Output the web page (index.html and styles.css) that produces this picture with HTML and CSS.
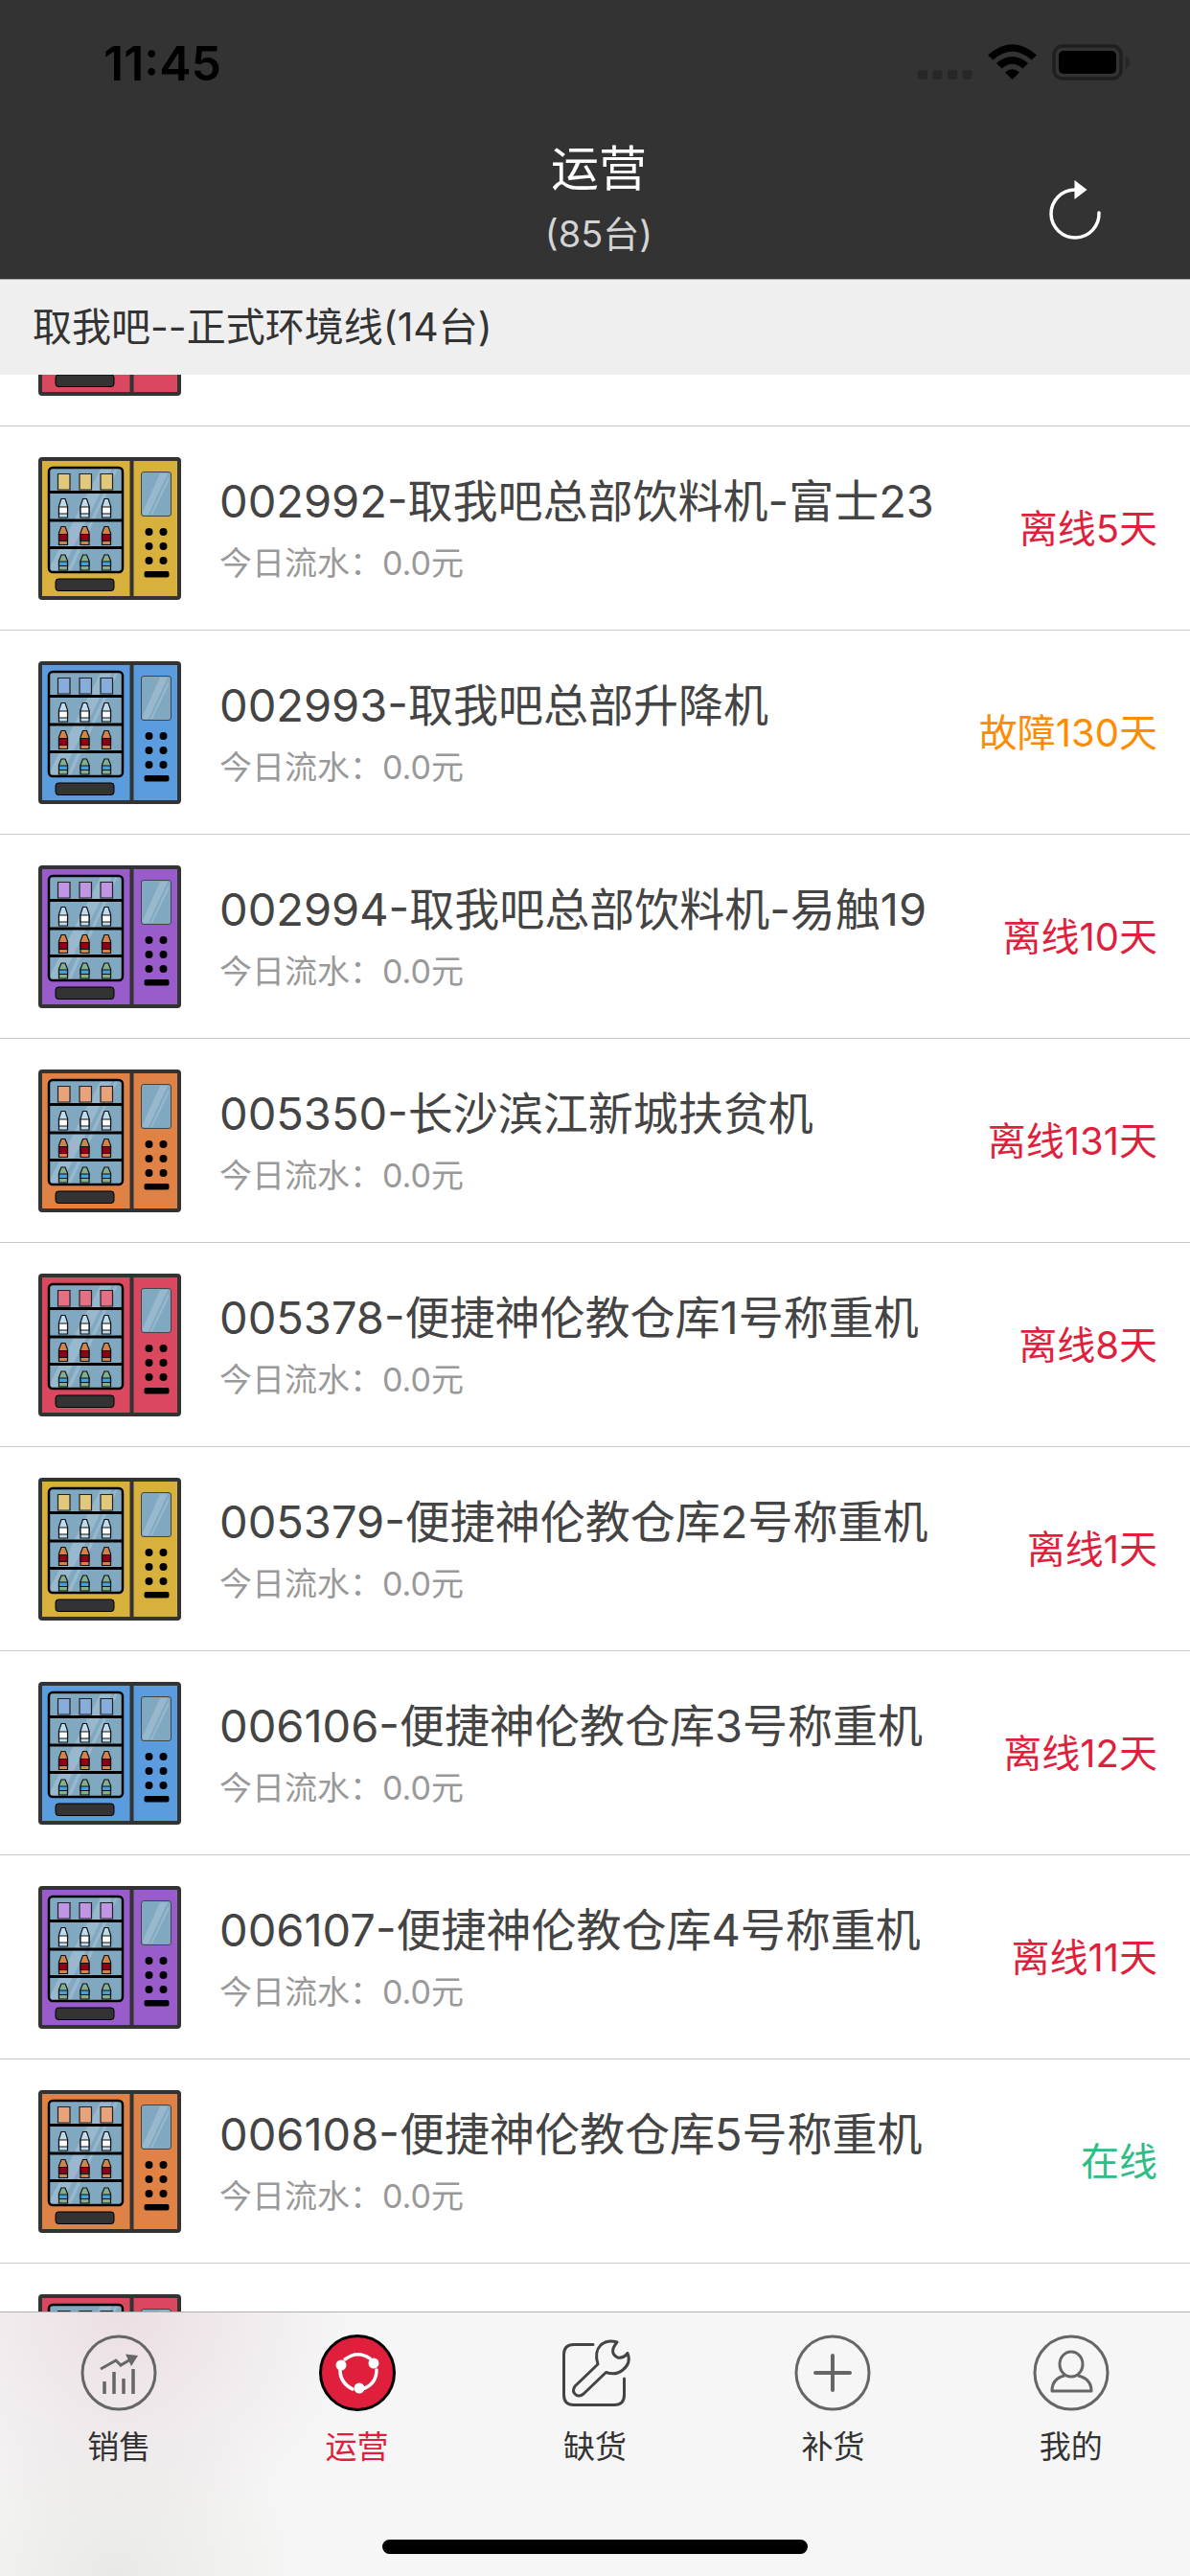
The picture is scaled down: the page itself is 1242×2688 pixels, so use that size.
FILE: index.html
```
<!DOCTYPE html>
<html lang="zh-CN">

<head>
    <title>运营</title>
    <meta charset="UTF-8">
    <meta name="viewport" content="width=device-width, initial-scale=1">
    <link rel="stylesheet" href="styles.css">
</head>

<body>
    <!-- Shared machine drawing, cabinet and product colours come from the row class -->
    <svg class="defs" aria-hidden="true">
        <symbol id="machine" viewBox="0 0 149 149">
            <rect x="2" y="2" width="145" height="145" rx="2" class="cabinet" stroke="#333" stroke-width="4" />
            <path d="M97.500 2V147" stroke="#333" stroke-width="4" />
            <rect x="11" y="11" width="77" height="109" rx="4" fill="#80a8c1" />
            <path d="M65 12H77L24 119H13V113ZM80 12H83L34 119H30Z" fill="#98b9cd" />
            <path d="M12 36.500H88M12 66H88M12 94.500H88" stroke="#000" stroke-width="3" />
            <rect x="11" y="11" width="77" height="109" rx="4" fill="none" stroke="#000" stroke-width="2.500" />
            <g class="box" stroke="#222" stroke-width="1.200">
                <path d="M20.500 17.500H33V34H20.500ZM43 17.500H55.500V34H43ZM65 17.500H77.500V34H65Z" />
            </g>
            <g stroke="#111" stroke-width="1.200">
                <g id="bottles">
                    <path d="M24 43.500H28L30.500 51V63H21.500V51Z" fill="#bedcee" />
                    <path d="M21.500 52H30.500V59H21.500Z" fill="#fff" />
                    <path d="M24 72.500H28L30.500 79V91.500H21.500V79Z" fill="#d38349" />
                    <path d="M21.500 80.500H30.500V87.500H21.500Z" fill="#8d0017" />
                    <path d="M24 102H28L30.500 108V118H21.500V108Z" fill="#85ae8c" />
                    <path d="M21.500 109H30.500V113.500H21.500Z" fill="#40a2df" />
                </g>
                <use href="#bottles" x="22.500" />
                <use href="#bottles" x="45" />
            </g>
            <rect x="18" y="127" width="61" height="12.500" rx="3" fill="#333" stroke="#000" />
            <rect x="107.500" y="15.500" width="31" height="46" rx="2.500" fill="#80a8c1" stroke="#444" />
            <path d="M127 17H135L115 60H109V57ZM136 20V25L119 60H117Z" fill="#98b9cd" />
            <circle cx="115.500" cy="78" r="4" />
            <circle cx="130.500" cy="78" r="4" />
            <circle cx="115.500" cy="93" r="4" />
            <circle cx="130.500" cy="93" r="4" />
            <circle cx="115.500" cy="108" r="4" />
            <circle cx="130.500" cy="108" r="4" />
            <rect x="110.500" y="119" width="26" height="6.500" rx="2" />
        </symbol>
    </svg>

    <div class="app">
        <header class="header">
            <div class="status-bar">
                <span class="time">11:45</span>
                <svg class="status-icons" viewBox="0 0 224 40" aria-hidden="true">
                    <g fill="#272727">
                        <rect x="0" y="27" width="10" height="10" rx="3" />
                        <rect x="15.500" y="27" width="10" height="10" rx="3" />
                        <rect x="31" y="27" width="10" height="10" rx="3" />
                        <rect x="46.500" y="27" width="10" height="10" rx="3" />
                        <path d="M216.500 12.500Q221 14 221 19T216.500 25.500Z" />
                    </g>
                    <path d="M73 11.500Q98.500-11 124 11.500L118.500 16.500Q98.500-1 78.500 16.500Z" />
                    <path d="M82 20Q98.500 6 115 20L109.500 25.500Q98.500 16 87.500 25.500Z" />
                    <path d="M91 29.500Q98.500 23 106 29.500L98.500 37Z" />
                    <rect x="142" y="2" width="70" height="34" rx="9" fill="none" stroke="#1f1f1f" stroke-width="3.500" />
                    <rect x="147" y="7" width="60" height="24" rx="5" />
                </svg>
            </div>
            <div class="nav-bar">
                <div class="heading">
                    <h1>运营</h1>
                    <p>(85台)</p>
                </div>
                <button type="button" class="refresh" aria-label="刷新">
                    <svg viewBox="0 0 60 66">
                        <path d="M55 36A25 25 0 1 1 30 12" fill="none" stroke="#fff" stroke-width="3.500" stroke-linecap="round" />
                        <path d="M29.500 2L42.500 12L29.500 22Z" fill="#fff" />
                    </svg>
                </button>
            </div>
        </header>

        <h2 class="section-title">取我吧--正式环境线(14台)</h2>

        <main class="list-wrap">
            <ul id="machine-list" class="list"></ul>
        </main>

        <nav class="tab-bar">
            <div class="tabs">
                <a href="#sales" class="tab">
                    <svg viewBox="0 0 80 80" fill="none" stroke="#666" stroke-width="3">
                        <circle cx="40" cy="40" r="38" />
                        <path d="M25 49V62M35 39V62M45 46V62M55 36V62" stroke-width="3.500" />
                        <path d="M21 36L37 27L42 32L54 25" />
                        <path d="M47 20.500L60 22L53 33Z" fill="#666" stroke="none" />
                    </svg>
                    <span>销售</span>
                </a>
                <a href="#operation" class="tab active">
                    <svg viewBox="0 0 80 80" fill="none" stroke="#fff" stroke-width="3.500">
                        <circle cx="40" cy="40" r="38.500" fill="#e01f3d" stroke="#000" stroke-width="3" />
                        <path d="M27 26Q40 16 53 25M22 35Q21 50 35 57M45 57Q60 52 60 37" stroke-linecap="round" />
                        <g fill="#fff" stroke="none">
                            <circle cx="23" cy="32" r="5.500" />
                            <circle cx="57" cy="30" r="5.500" />
                            <circle cx="42" cy="56" r="5.500" />
                        </g>
                    </svg>
                    <span>运营</span>
                </a>
                <a href="#shortage" class="tab">
                    <svg viewBox="0 0 80 80" fill="none" stroke="#444" stroke-width="3" stroke-linecap="round" stroke-linejoin="round">
                        <path d="M38 10.500H18Q7.500 10.500 7.500 21V63Q7.500 73.500 18 73.500H60Q70.500 73.500 70.500 63V46" />
                        <path d="M63 8Q53 5 46 11Q39 18 43 31L19 54Q16 59 19 62Q23 66 28 62L51.500 39.500Q62 43 69 37Q78 30 74 19.500Q70 25 63.500 24Q54 19 63 8Z" />
                    </svg>
                    <span>缺货</span>
                </a>
                <a href="#restock" class="tab">
                    <svg viewBox="0 0 80 80" fill="none" stroke="#666" stroke-width="3">
                        <circle cx="40" cy="40" r="38" />
                        <path d="M40 22V58M22 40H58" stroke-width="4" stroke-linecap="round" />
                    </svg>
                    <span>补货</span>
                </a>
                <a href="#mine" class="tab">
                    <svg viewBox="0 0 80 80" fill="none" stroke="#666" stroke-width="3">
                        <circle cx="40" cy="40" r="38" />
                        <ellipse cx="40" cy="31" rx="12" ry="13" />
                        <path d="M33 43Q20 46 20 59H61Q61 46 47 43" stroke-linejoin="round" />
                    </svg>
                    <span>我的</span>
                </a>
            </div>
            <div class="home-indicator"></div>
        </nav>
    </div>

    <script>
        // Rows without a name are the ones scrolled half out of view
        const machines = [
            { color: 'red' },
            { name: '002992-取我吧总部饮料机-富士23', color: 'yellow', status: '离线5天', state: 'offline' },
            { name: '002993-取我吧总部升降机', color: 'blue', status: '故障130天', state: 'fault' },
            { name: '002994-取我吧总部饮料机-易触19', color: 'purple', status: '离线10天', state: 'offline' },
            { name: '005350-长沙滨江新城扶贫机', color: 'orange', status: '离线131天', state: 'offline' },
            { name: '005378-便捷神伦教仓库1号称重机', color: 'red', status: '离线8天', state: 'offline' },
            { name: '005379-便捷神伦教仓库2号称重机', color: 'yellow', status: '离线1天', state: 'offline' },
            { name: '006106-便捷神伦教仓库3号称重机', color: 'blue', status: '离线12天', state: 'offline' },
            { name: '006107-便捷神伦教仓库4号称重机', color: 'purple', status: '离线11天', state: 'offline' },
            { name: '006108-便捷神伦教仓库5号称重机', color: 'orange', status: '在线', state: 'online' },
            { color: 'red' }
        ];

        const list = document.getElementById('machine-list');

        // Build one row for each machine
        machines.forEach(function (machine) {
            const li = document.createElement('li');
            li.className = 'row ' + machine.color;
            li.innerHTML = '<svg class="machine" aria-hidden="true"><use href="#machine"></use></svg>';

            if (machine.name) {
                li.innerHTML +=
                    '<div class="info"><h3>' + machine.name + '</h3><p>今日流水：0.0元</p></div>' +
                    '<span class="state ' + machine.state + '">' + machine.status + '</span>';
            }
            list.appendChild(li);
        });
    </script>
</body>

</html>
```
FILE: styles.css
```
* {
    box-sizing: border-box;
}

body {
    margin: 0;
    font-family: Inter, "Noto Sans CJK SC", sans-serif;
    background-color: #fff;
    color: #444;
}

h1,
h2,
h3,
p,
ul {
    margin: 0;
    padding: 0;
    font-weight: normal;
}

.defs {
    position: absolute;
    width: 0;
    height: 0;
}

.app {
    display: flex;
    flex-direction: column;
    height: 100vh;
}

/* header */
.header {
    background-color: #333;
    border-bottom: 1px solid #aaa;
}

.status-bar {
    display: flex;
    justify-content: space-between;
    align-items: center;
    height: 132px;
    padding: 0 60px 0 108px;
}

.time {
    font-size: 50px;
    font-weight: 600;
    color: #000;
}

.status-icons {
    width: 224px;
    height: 40px;
}

.nav-bar {
    display: grid;
    grid-template-columns: 1fr auto 1fr;
    height: 159px;
    padding-left: 8px;
}

.heading {
    grid-column: 2;
    padding-top: 2px;
    text-align: center;
    color: #fff;
}

.heading h1 {
    font-size: 50px;
    line-height: 84px;
}

.heading p {
    font-size: 38px;
    line-height: 52px;
    color: #d4d4d4;
}

.refresh {
    justify-self: end;
    align-self: start;
    margin: 54px 90px 0 0;
    padding: 0;
    border: none;
    background: none;
    cursor: pointer;
}

.refresh svg {
    display: block;
    width: 60px;
    height: 66px;
}

.section-title {
    height: 99px;
    padding: 0 34px;
    background-color: #efefef;
    font-size: 41px;
    line-height: 99px;
    color: #333;
}

/* machine list */
.list-wrap {
    flex: 1;
    min-height: 0;
    overflow: hidden;
}

.list {
    margin-top: -159px;
    list-style-type: none;
}

.row {
    display: flex;
    align-items: center;
    height: 213px;
    padding: 0 34px 0 40px;
    border-bottom: 1px solid #c8c8c8;
}

.machine {
    flex: none;
    width: 149px;
    height: 149px;
    margin-right: 40px;
}

.cabinet {
    fill: var(--cabinet);
}

.box {
    fill: var(--box);
}

.red {
    --cabinet: #d9485f;
    --box: #e57085;
}

.yellow {
    --cabinet: #d7b13c;
    --box: #e1c87c;
}

.blue {
    --cabinet: #5b9cdf;
    --box: #86addb;
}

.purple {
    --cabinet: #985dcb;
    --box: #c095e3;
}

.orange {
    --cabinet: #e08246;
    --box: #e8a37b;
}

.info {
    flex: 1;
    padding-top: 4px;
}

.info h3 {
    font-size: 47px;
    line-height: 70px;
    white-space: nowrap;
}

.info p {
    font-size: 34px;
    line-height: 60px;
    color: #999;
}

.state {
    padding-bottom: 4px;
    font-size: 40px;
}

.offline {
    color: #e01f3d;
}

.fault {
    color: #ff8c00;
}

.online {
    color: #2ebd85;
}

/* tab bar */
.tab-bar {
    display: flex;
    flex-direction: column;
    justify-content: space-between;
    align-items: center;
    height: 276px;
    padding: 23px 0;
    border-top: 1px solid #b0b0b0;
    background: radial-gradient(circle at 130px 0, #ebdfe4, transparent 240px), radial-gradient(circle at 120px 276px, #e9eae5, transparent 200px), #f6f6f6;
}

.tabs {
    display: flex;
    width: 100%;
}

.tab {
    flex: 1;
    display: flex;
    flex-direction: column;
    align-items: center;
    gap: 12px;
    font-size: 33px;
    line-height: 50px;
    color: #333;
    text-decoration: none;
}

.tab svg {
    width: 80px;
    height: 80px;
}

.tab.active {
    color: #e01f3d;
}

.home-indicator {
    width: 444px;
    height: 15px;
    border-radius: 8px;
    background-color: #000;
}
```
